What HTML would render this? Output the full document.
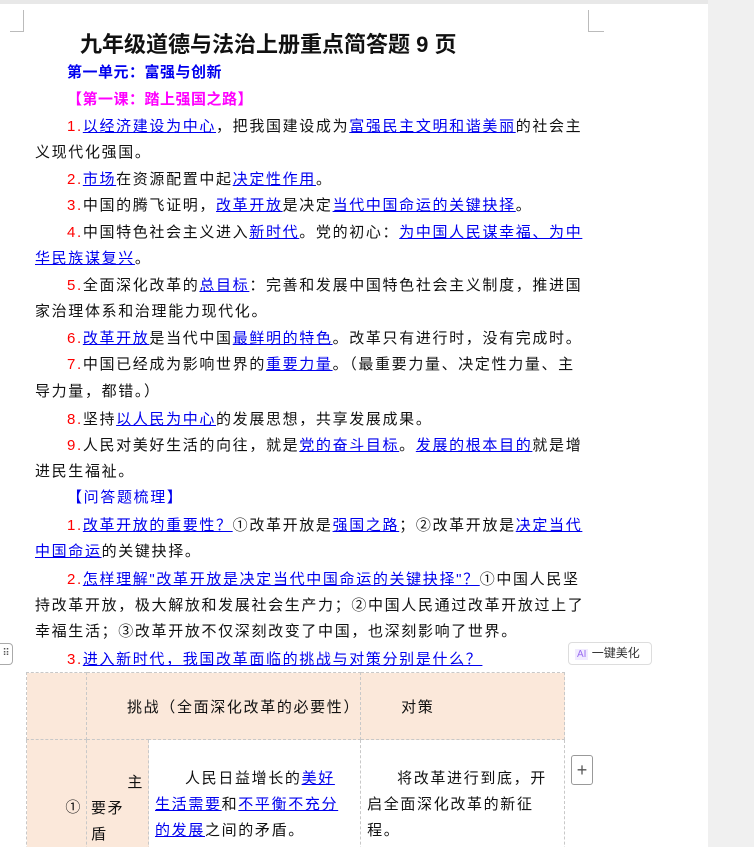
<!DOCTYPE html>
<html><head><meta charset="utf-8"><style>
*{margin:0;padding:0;box-sizing:border-box}
html,body{width:754px;height:847px;overflow:hidden}
body{background:#fff;position:relative;font-family:"Liberation Sans","Noto Sans CJK SC",sans-serif;color:#111}
.g{position:absolute;left:708px;top:0;width:46px;height:847px;background:#f0f0f0}
.top{position:absolute;left:0;top:0;width:708px;height:4px;background:#e8e8e8}
.l{position:absolute;white-space:nowrap;font-size:15px;line-height:20px;letter-spacing:1.65px}
.b{color:#0000ee;text-decoration:underline;text-decoration-color:#0000ee}
.r{color:#ff0000}
.c{position:absolute;border-color:#bbb;border-style:solid}
table{position:absolute;left:26px;top:672px;border-collapse:collapse;font-size:15px;letter-spacing:1.65px;table-layout:fixed}
td{border:1px dashed #c8c8c8;vertical-align:middle}
.h{background:#fbe8da}
</style></head><body>
<div class="top"></div><div class="g"></div>
<div class="c" style="left:10px;top:10px;border-width:0 1px 1px 0;width:14px;height:22px"></div>
<div class="c" style="left:588px;top:10px;border-width:0 0 1px 1px;width:16px;height:22px"></div>
<div class="l" style="left:80px;top:31px;font-size:22px;line-height:28px;font-weight:bold;letter-spacing:0">九年级道德与法治上册重点简答题 9 页</div>
<div class="l" style="left:67px;top:63px;font-weight:bold;color:#0000ee;letter-spacing:0.5px">第一单元：富强与创新</div>
<div class="l" style="left:67px;top:90px;font-weight:bold;color:#ff00ff;letter-spacing:0.5px">【第一课：踏上强国之路】</div>
<div class="l" style="left:67px;top:117px"><span class="r">1.</span><span class="b">以经济建设为中心</span>，把我国建设成为<span class="b">富强民主文明和谐美丽</span>的社会主</div>
<div class="l" style="left:35px;top:143px">义现代化强国。</div>
<div class="l" style="left:67px;top:170px"><span class="r">2.</span><span class="b">市场</span>在资源配置中起<span class="b">决定性作用</span>。</div>
<div class="l" style="left:67px;top:196px"><span class="r">3.</span>中国的腾飞证明，<span class="b">改革开放</span>是决定<span class="b">当代中国命运的关键抉择</span>。</div>
<div class="l" style="left:67px;top:223px"><span class="r">4.</span>中国特色社会主义进入<span class="b">新时代</span>。党的初心：<span class="b">为中国人民谋幸福、为中</span></div>
<div class="l" style="left:35px;top:249px"><span class="b">华民族谋复兴</span>。</div>
<div class="l" style="left:67px;top:276px"><span class="r">5.</span>全面深化改革的<span class="b">总目标</span>：完善和发展中国特色社会主义制度，推进国</div>
<div class="l" style="left:35px;top:302px">家治理体系和治理能力现代化。</div>
<div class="l" style="left:67px;top:329px"><span class="r">6.</span><span class="b">改革开放</span>是当代中国<span class="b">最鲜明的特色</span>。改革只有进行时，没有完成时。</div>
<div class="l" style="left:67px;top:355px"><span class="r">7.</span>中国已经成为影响世界的<span class="b">重要力量</span>。（最重要力量、决定性力量、主</div>
<div class="l" style="left:35px;top:382px">导力量，都错。）</div>
<div class="l" style="left:67px;top:410px"><span class="r">8.</span>坚持<span class="b">以人民为中心</span>的发展思想，共享发展成果。</div>
<div class="l" style="left:67px;top:436px"><span class="r">9.</span>人民对美好生活的向往，就是<span class="b">党的奋斗目标</span>。<span class="b">发展的根本目的</span>就是增</div>
<div class="l" style="left:35px;top:462px">进民生福祉。</div>
<div class="l" style="left:67px;top:488px;color:#0000ee">【问答题梳理】</div>
<div class="l" style="left:67px;top:516px"><span class="r">1.</span><span class="b">改革开放的重要性？</span>①改革开放是<span class="b">强国之路</span>；②改革开放是<span class="b">决定当代</span></div>
<div class="l" style="left:35px;top:542px"><span class="b">中国命运</span>的关键抉择。</div>
<div class="l" style="left:67px;top:570px"><span class="r">2.</span><span class="b">怎样理解"改革开放是决定当代中国命运的关键抉择"？</span>①中国人民坚</div>
<div class="l" style="left:35px;top:596px">持改革开放，极大解放和发展社会生产力；②中国人民通过改革开放过上了</div>
<div class="l" style="left:35px;top:622px">幸福生活；③改革开放不仅深刻改变了中国，也深刻影响了世界。</div>
<div class="l" style="left:67px;top:650px"><span class="r">3.</span><span class="b">进入新时代，我国改革面临的挑战与对策分别是什么？</span></div>
<div style="position:absolute;left:0;top:643px;width:13px;height:22px;border:1px solid #aaa;border-left:0;border-radius:0 4px 4px 0;font-size:10px;text-align:center;line-height:20px;color:#555">⠿</div>
<div style="position:absolute;left:568px;top:642px;width:84px;height:23px;border:1px solid #ddd;border-radius:4px;font-size:12px;line-height:21px;padding-left:6px;color:#333;background:#fff"><span style="color:#9a6cf0;font-size:10px;background:#f1ebff;padding:0 2px">AI</span> 一键美化</div>
<div style="position:absolute;left:571px;top:755px;width:22px;height:30px;border:1px solid #999;border-radius:3px;text-align:center;line-height:28px;font-size:18px;color:#555">+</div>
<table>
<colgroup><col style="width:60px"><col style="width:62px"><col style="width:212px"><col style="width:204px"></colgroup>
<tr style="height:67px"><td class="h"></td><td class="h" colspan="2" style="padding-left:40px;white-space:nowrap">挑战（全面深化改革的必要性）</td><td class="h" style="padding-left:40px">对策</td></tr>
<tr style="height:130px"><td class="h" style="text-align:right;padding-right:4px;padding-top:4px">①</td><td class="h" style="line-height:26px;padding:8px 4px 0 4px"><div style="text-align:right">主</div>要矛<br>盾</td><td style="line-height:26px;padding:0 20px 0 6px;overflow:hidden"><span style="padding-left:30px"></span>人民日益增长的<span class="b">美好生活需要</span>和<span class="b">不平衡不充分的发展</span>之间的矛盾。</td><td style="line-height:26px;padding:0 12px 0 6px"><span style="padding-left:30px"></span>将改革进行到底，开启全面深化改革的新征程。</td></tr>
</table>
</body></html>
